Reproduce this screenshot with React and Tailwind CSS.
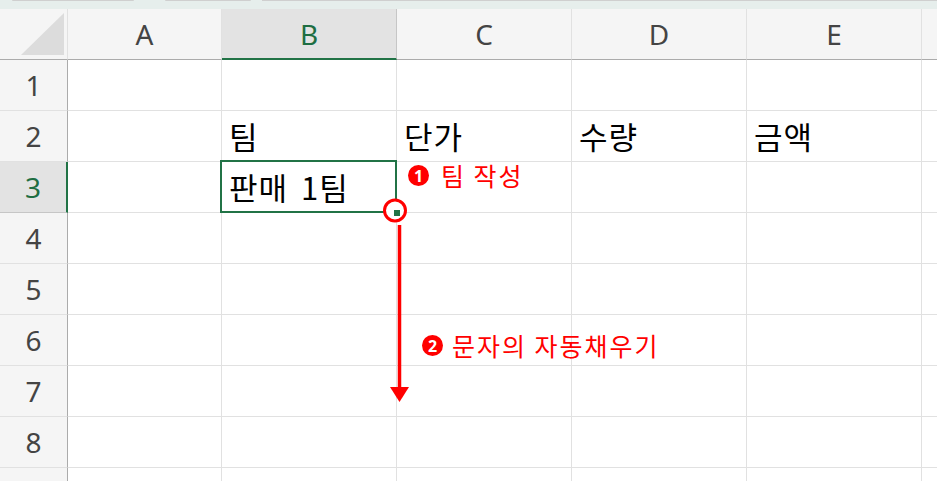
import React from 'react';

const COLS = [
  { key: 'A', width: 'w-[154px]' },
  { key: 'B', width: 'w-[175px]' },
  { key: 'C', width: 'w-[175px]' },
  { key: 'D', width: 'w-[175px]' },
  { key: 'E', width: 'w-[175px]' },
];

const CELLS = {
  '2B': '팀',
  '2C': '단가',
  '2D': '수량',
  '2E': '금액',
  '3B': '판매 1팀',
};

// row 9 is only partly in view, its number sits below the edge
const ROWS = [1, 2, 3, 4, 5, 6, 7, 8, 9];

const HEAD_FONT = { fontFamily: '"Noto Sans", "Liberation Sans", sans-serif' };
const CELL_FONT = { fontFamily: '"Noto Sans CJK KR", "Noto Sans", sans-serif' };

function Corner() {
  return (
    <div className="w-[68px] shrink-0 border-r border-b border-r-[#e1e1e1] border-b-[#ababab]">
      <svg width="67" height="50" viewBox="0 0 67 50">
        <polygon points="21,46 64,46 64,4" fill="#dcdcdc" />
      </svg>
    </div>
  );
}

function ColumnHeader({ col }) {
  const selected = col.key === 'B';
  return (
    <div
      className={
        selected
          ? `${col.width} shrink-0 flex items-center justify-center bg-[#e3e3e3] border-r border-b-2 border-r-[#c6c6c6] border-b-[#217346] text-[#1e6e42] text-[28px]`
          : `${col.width} shrink-0 flex items-center justify-center border-r border-b border-r-[#e1e1e1] border-b-[#ababab] text-[#444444] text-[28px]`
      }
      style={HEAD_FONT}
    >
      {col.key}
    </div>
  );
}

function RowHeader({ row }) {
  const selected = row === 3;
  return (
    <div
      className={
        selected
          ? 'w-[68px] shrink-0 flex items-center justify-center bg-[#e3e3e3] border-r-2 border-b border-r-[#217346] border-b-[#c6c6c6] text-[#1e6e42] text-[28px]'
          : 'w-[68px] shrink-0 flex items-center justify-center bg-[#f5f5f5] border-r border-b border-r-[#ababab] border-b-[#e1e1e1] text-[#444444] text-[28px]'
      }
      style={HEAD_FONT}
    >
      {row < 9 ? row : null}
    </div>
  );
}

function Cell({ row, col }) {
  const value = CELLS[`${row}${col.key}`];
  const active = row === 3 && col.key === 'B';
  return (
    <div
      className={`${col.width} shrink-0 relative flex items-center pl-[7px] border-r border-b border-[#e1e1e1] text-[31px] tracking-[1px] [word-spacing:5px] text-black whitespace-nowrap`}
      style={CELL_FONT}
    >
      {value}
      {active && (
        <div className="absolute -left-[2px] -top-[2px] -right-[1px] -bottom-[1px] border-2 border-[#217346] z-10" />
      )}
    </div>
  );
}

function Callout({ num, children, className }) {
  return (
    <div className={`absolute flex items-center text-[#ff0000] z-30 ${className}`} style={CELL_FONT}>
      <span
        className="w-[21px] h-[21px] rounded-full bg-[#ff0000] text-white text-[16px] font-bold leading-none flex items-center justify-center"
        style={HEAD_FONT}
      >
        {num}
      </span>
      {children}
    </div>
  );
}

export default function App() {
  return (
    <div className="w-[937px] h-[481px] overflow-hidden bg-white relative">
      {/* ribbon edge */}
      <div className="h-[9px] bg-[#e6eeec] flex items-start">
        <div className="w-[12px]" />
        <div className="w-[122px] h-px bg-[#cfcfcf] rounded-b" />
        <div className="w-[31px]" />
        <div className="w-[86px] h-px bg-[#cfcfcf] rounded-b" />
        <div className="w-[11px]" />
        <div className="flex-1 h-px bg-[#cfcfcf]" />
      </div>

      {/* column headers */}
      <div className="flex h-[51px] bg-[#f5f5f5]">
        <Corner />
        {COLS.map((col) => (
          <ColumnHeader key={col.key} col={col} />
        ))}
        <div className="flex-1 border-b border-b-[#ababab]" />
      </div>

      {/* rows */}
      {ROWS.map((row) => (
        <div key={row} className="flex h-[51px]">
          <RowHeader row={row} />
          {COLS.map((col) => (
            <Cell key={col.key} row={row} col={col} />
          ))}
          <div className="flex-1 border-b border-[#e1e1e1]" />
        </div>
      ))}

      {/* fill handle + drag arrow */}
      <svg className="absolute left-0 top-0 z-20 pointer-events-none" width="937" height="481" viewBox="0 0 937 481">
        <circle cx="395" cy="210.5" r="10.5" fill="#ffffff" stroke="#ff0000" strokeWidth="3" />
        <rect x="394" y="210" width="6" height="6" fill="#217346" />
        <line x1="399.5" y1="225" x2="399.5" y2="389" stroke="#ff0000" strokeWidth="3.5" />
        <polygon points="390,387 409,387 399.5,402" fill="#ff0000" />
      </svg>

      <Callout num="1" className="left-[408px] top-[163px]">
        <span className="ml-[12px] text-[25px] leading-none tracking-[2px]">팀 작성</span>
      </Callout>
      <Callout num="2" className="left-[422px] top-[333px]">
        <span className="ml-[9px] text-[25px] leading-none tracking-[2px]">문자의 자동채우기</span>
      </Callout>
    </div>
  );
}
